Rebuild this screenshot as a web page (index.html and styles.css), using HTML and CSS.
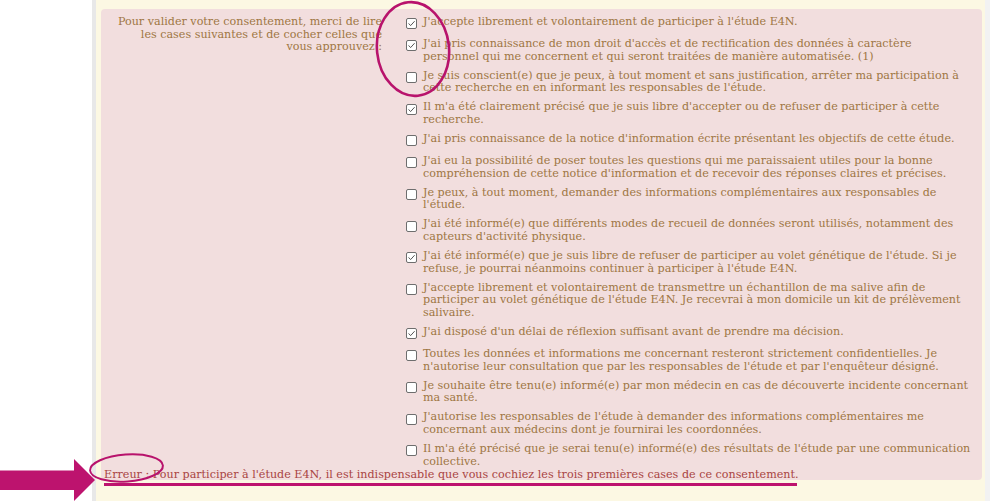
FILE: index.html
```html
<!DOCTYPE html>
<html lang="fr">
<head>
<meta charset="utf-8">
<title>Consentement E4N</title>
<link rel="stylesheet" href="styles.css">
</head>
<body>
<div class="frame">
  <div class="panel">
    <div class="row">
      <div class="label">Pour valider votre consentement, merci de lire<br>les cases suivantes et de cocher celles que<br>vous approuvez :</div>
      <ul class="items">
        <li class="item"><span class="box on"><svg viewBox="0 0 9 9"><path d="M1.6 4.4 L3.6 6.6 L7.6 2.2"/></svg></span><span class="txt">J'accepte librement et volontairement de participer à l'étude E4N.</span></li>
        <li class="item"><span class="box on"><svg viewBox="0 0 9 9"><path d="M1.6 4.4 L3.6 6.6 L7.6 2.2"/></svg></span><span class="txt">J'ai pris connaissance de mon droit d'accès et de rectification des données à caractère<br>personnel qui me concernent et qui seront traitées de manière automatisée. (1)</span></li>
        <li class="item"><span class="box"></span><span class="txt">Je suis conscient(e) que je peux, à tout moment et sans justification, arrêter ma participation à<br>cette recherche en en informant les responsables de l'étude.</span></li>
        <li class="item"><span class="box on"><svg viewBox="0 0 9 9"><path d="M1.6 4.4 L3.6 6.6 L7.6 2.2"/></svg></span><span class="txt">Il m'a été clairement précisé que je suis libre d'accepter ou de refuser de participer à cette<br>recherche.</span></li>
        <li class="item"><span class="box"></span><span class="txt">J'ai pris connaissance de la notice d'information écrite présentant les objectifs de cette étude.</span></li>
        <li class="item"><span class="box"></span><span class="txt">J'ai eu la possibilité de poser toutes les questions qui me paraissaient utiles pour la bonne<br>compréhension de cette notice d'information et de recevoir des réponses claires et précises.</span></li>
        <li class="item"><span class="box"></span><span class="txt">Je peux, à tout moment, demander des informations complémentaires aux responsables de<br>l'étude.</span></li>
        <li class="item"><span class="box"></span><span class="txt">J'ai été informé(e) que différents modes de recueil de données seront utilisés, notamment des<br>capteurs d'activité physique.</span></li>
        <li class="item"><span class="box on"><svg viewBox="0 0 9 9"><path d="M1.6 4.4 L3.6 6.6 L7.6 2.2"/></svg></span><span class="txt">J'ai été informé(e) que je suis libre de refuser de participer au volet génétique de l'étude. Si je<br>refuse, je pourrai néanmoins continuer à participer à l'étude E4N.</span></li>
        <li class="item"><span class="box"></span><span class="txt">J'accepte librement et volontairement de transmettre un échantillon de ma salive afin de<br>participer au volet génétique de l'étude E4N. Je recevrai à mon domicile un kit de prélèvement<br>salivaire.</span></li>
        <li class="item"><span class="box on"><svg viewBox="0 0 9 9"><path d="M1.6 4.4 L3.6 6.6 L7.6 2.2"/></svg></span><span class="txt">J'ai disposé d'un délai de réflexion suffisant avant de prendre ma décision.</span></li>
        <li class="item"><span class="box"></span><span class="txt">Toutes les données et informations me concernant resteront strictement confidentielles. Je<br>n'autorise leur consultation que par les responsables de l'étude et par l'enquêteur désigné.</span></li>
        <li class="item"><span class="box"></span><span class="txt">Je souhaite être tenu(e) informé(e) par mon médecin en cas de découverte incidente concernant<br>ma santé.</span></li>
        <li class="item"><span class="box"></span><span class="txt">J'autorise les responsables de l'étude à demander des informations complémentaires me<br>concernant aux médecins dont je fournirai les coordonnées.</span></li>
        <li class="item"><span class="box"></span><span class="txt">Il m'a été précisé que je serai tenu(e) informé(e) des résultats de l'étude par une communication<br>collective.</span></li>
      </ul>
    </div>
    <div class="error">Erreur : Pour participer à l'étude E4N, il est indispensable que vous cochiez les trois premières cases de ce consentement.</div>
  </div>
</div>
<svg class="annot" viewBox="0 0 1000 501" width="1000" height="501">
  <ellipse cx="413" cy="49" rx="36" ry="47" transform="rotate(-6 413 49)" class="ring"/>
  <ellipse cx="126.5" cy="468" rx="36.5" ry="13.5" transform="rotate(-4 126.5 468)" class="ring thin"/>
  <rect x="104" y="483" width="693" height="3" class="mark"/>
  <polygon points="0,470.5 74,470.5 74,459 95,480 74,501 74,490 0,490" class="mark"/>
</svg>
</body>
</html>
```

FILE: styles.css
```css
html, body {
  margin: 0;
  padding: 0;
  height: 501px;
  overflow: hidden;
  background: #ffffff;
}

body {
  position: relative;
  font-family: "DejaVu Serif", "Liberation Serif", serif;
  font-size: 11.15px;
  color: #9e7643;
}

.frame {
  margin-left: 92px;
  width: 881px;
  height: 501px;
  box-sizing: content-box;
  padding: 9px 3px 0 5px;
  border-left: 4px solid #e8e8e8;
  border-right: 5px solid #f2f2f2;
  background: #fcf8e3;
}

.panel {
  height: 471px;
  box-sizing: border-box;
  padding-top: 7px;
  background: #f2dede;
  border-radius: 4px;
}

.row {
  display: flex;
  align-items: flex-start;
}

.label {
  width: 281px;
  flex: none;
  text-align: right;
  line-height: 12.7px;
  white-space: nowrap;
}

.items {
  list-style: none;
  margin: 0 0 0 24px;
  padding: 0;
  display: flex;
  flex-direction: column;
  gap: 6.2px;
  line-height: 12.7px;
}

.item {
  display: flex;
  align-items: flex-start;
  min-height: 16px;
}

.box {
  flex: none;
  width: 11px;
  height: 11px;
  box-sizing: border-box;
  margin-top: 2.3px;
  margin-right: 6px;
  border: 1px solid #6e6e6e;
  border-radius: 2px;
  background: #ffffff;
  display: flex;
  align-items: center;
  justify-content: center;
}

.box svg {
  width: 9px;
  height: 9px;
  display: block;
}

.box svg path {
  fill: none;
  stroke: #555555;
  stroke-width: 1;
}

.txt {
  white-space: nowrap;
}

.error {
  padding-top: 1px;
  padding-left: 3px;
  line-height: 12.7px;
  color: #a94442;
  white-space: nowrap;
}

.annot {
  position: absolute;
  top: 0;
  left: 0;
  pointer-events: none;
}

.ring {
  fill: none;
  stroke: #b8136c;
  stroke-width: 2.6;
}

.ring.thin {
  stroke-width: 2;
}

.mark {
  fill: #bd136e;
}
```
